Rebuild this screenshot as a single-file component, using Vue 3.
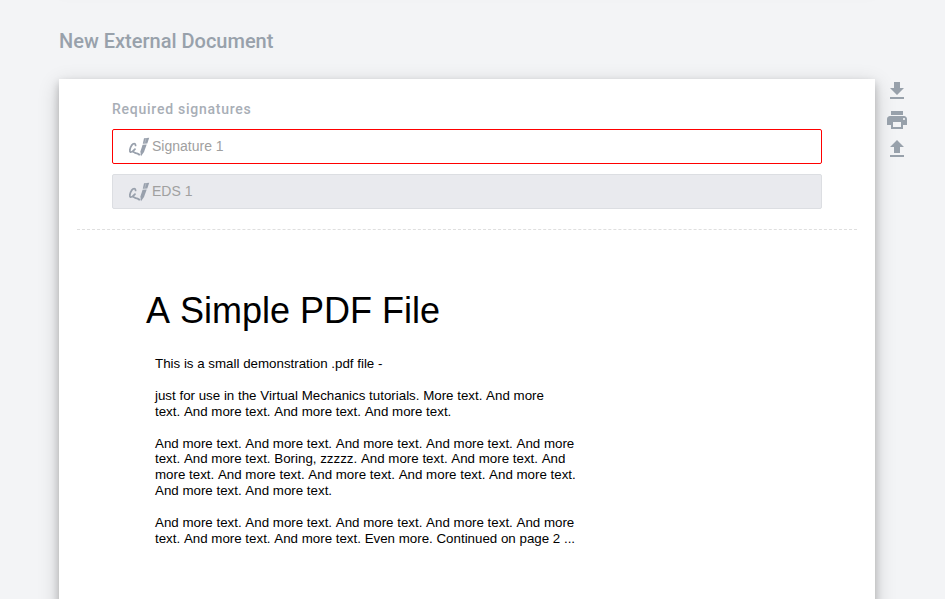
<script setup>
const signatures = [
  { name: 'Signature 1', state: 'required' },
  { name: 'EDS 1', state: 'disabled' },
]

const actions = [
  { label: 'Download', path: 'M19 9h-4V3H9v6H5l7 7 7-7zM5 18v2h14v-2H5z' },
  {
    label: 'Print',
    path: 'M19 8H5c-1.66 0-3 1.34-3 3v6h4v4h12v-4h4v-6c0-1.66-1.34-3-3-3zm-3 11H8v-5h8v5zm3-7c-.55 0-1-.45-1-1s.45-1 1-1 1 .45 1 1-.45 1-1 1zm-1-9H6v4h12V3z',
  },
  { label: 'Upload', path: 'M9 16h6v-6h4l-7-7-7 7h4zm-4 2h14v2H5z' },
]

const paragraphs = [
  ['This is a small demonstration .pdf file -'],
  [
    'just for use in the Virtual Mechanics tutorials. More text. And more',
    'text. And more text. And more text. And more text.',
  ],
  [
    'And more text. And more text. And more text. And more text. And more',
    'text. And more text. Boring, zzzzz. And more text. And more text. And',
    'more text. And more text. And more text. And more text. And more text.',
    'And more text. And more text.',
  ],
  [
    'And more text. And more text. And more text. And more text. And more',
    'text. And more text. And more text. Even more. Continued on page 2 ...',
  ],
]
</script>

<template>
  <div class="page">
    <div class="previous"></div>
    <h1 class="title">New External Document</h1>
    <div class="row">
      <main class="sheet">
        <section class="signatures">
          <h2 class="subtitle">Required signatures</h2>
          <div v-for="s in signatures" :key="s.name" class="field" :class="s.state">
            <svg class="pen" viewBox="0 0 22 20" width="22" height="20">
              <path
                class="stroke"
                d="M7.6 8.4C7.6 6.2 5.4 6 3.6 8.4C1.8 11 1.2 14.6 2.6 15.2C4.2 15.4 5.8 13.6 7 12.2M5.4 15C7 15.6 7.4 16.6 8.8 16.4C10 16.2 10.4 17.6 11.6 17.6"
              />
              <path d="M16 1.2L21.2 .7L19.3 6.6L14.8 6.8Z" />
              <path d="M14.6 7.7L18.7 7.6L16 15L13 19.2L12.4 14.4Z" />
              <path class="shine" d="M18.1 1.2L16.6 6.4" />
            </svg>
            <span>{{ s.name }}</span>
          </div>
        </section>
        <article class="pdf">
          <h3 class="pdf-title">A Simple PDF File</h3>
          <div class="pdf-body">
            <p v-for="(lines, i) in paragraphs" :key="i">
              <span v-for="line in lines" :key="line" class="line">{{ line }}</span>
            </p>
          </div>
        </article>
      </main>
      <nav class="actions">
        <svg v-for="a in actions" :key="a.label" :aria-label="a.label" viewBox="0 0 24 24" width="24" height="24">
          <path :d="a.path" />
        </svg>
      </nav>
    </div>
  </div>
</template>

<style>
body {
  background: #f3f4f6;
  overflow: hidden;
}
</style>

<style scoped>
.page {
  height: 599px;
  overflow: hidden;
  background: #f3f4f6;
  color: #98a1ab;
  font-family: Roboto, sans-serif;
}
.previous {
  height: 20px;
  margin: -20px 70px 0 59px;
  box-shadow: 0 -14px 20px rgba(0, 0, 0, 0.1);
}
.title {
  margin: 29px 0 0 59px;
  font-size: 20px;
  line-height: 24px;
  font-weight: 500;
}
.row {
  display: flex;
  margin: 26px 0 0 59px;
}
.sheet {
  width: 816px;
  height: 1056px;
  background: #fff;
  box-shadow: 0 4px 8px rgba(0, 0, 0, 0.2), 0 6px 20px rgba(0, 0, 0, 0.19);
}
.signatures {
  margin: 0 18px;
  padding: 20px 35px;
  height: 110px;
  border-bottom: 1px dashed #dfdfdf;
}
.subtitle {
  margin: 0 0 10px;
  font-size: 14px;
  line-height: 20px;
  font-weight: 500;
  letter-spacing: 0.75px;
  color: #a8aeb6;
}
.field {
  display: flex;
  align-items: center;
  box-sizing: border-box;
  height: 35px;
  margin-bottom: 10px;
  padding-left: 15px;
  border: 1px solid #dcdee2;
  border-radius: 2px;
  font: 14px 'Liberation Sans', Arial, sans-serif;
  color: #a0a0a0;
}
.field span {
  margin-left: 2px;
  padding-bottom: 2px;
}
.required {
  border-color: #f00;
}
.disabled {
  background: #e9eaee;
}
.pen {
  fill: #98a0ac;
}
.stroke {
  fill: none;
  stroke: #98a0ac;
  stroke-width: 1.8;
  stroke-linecap: round;
}
.shine {
  fill: none;
  stroke: #c3c8cf;
  stroke-width: 0.6;
}
.pdf {
  padding: 60px 87px;
  color: #000;
  font-family: 'Liberation Sans', Arial, sans-serif;
  font-kerning: none;
}
.pdf-title {
  margin: 0;
  font-size: 36px;
  line-height: 42px;
  font-weight: 400;
}
.pdf-body {
  padding: 24px 0 0 9px;
  font-size: 13.33px;
  line-height: 15.9px;
}
.pdf-body p {
  margin: 0 0 15.9px;
}
.line {
  display: block;
  white-space: nowrap;
}
.actions {
  display: flex;
  flex-direction: column;
  gap: 5px;
  margin-left: 10px;
  fill: #98a1ab;
}
</style>
